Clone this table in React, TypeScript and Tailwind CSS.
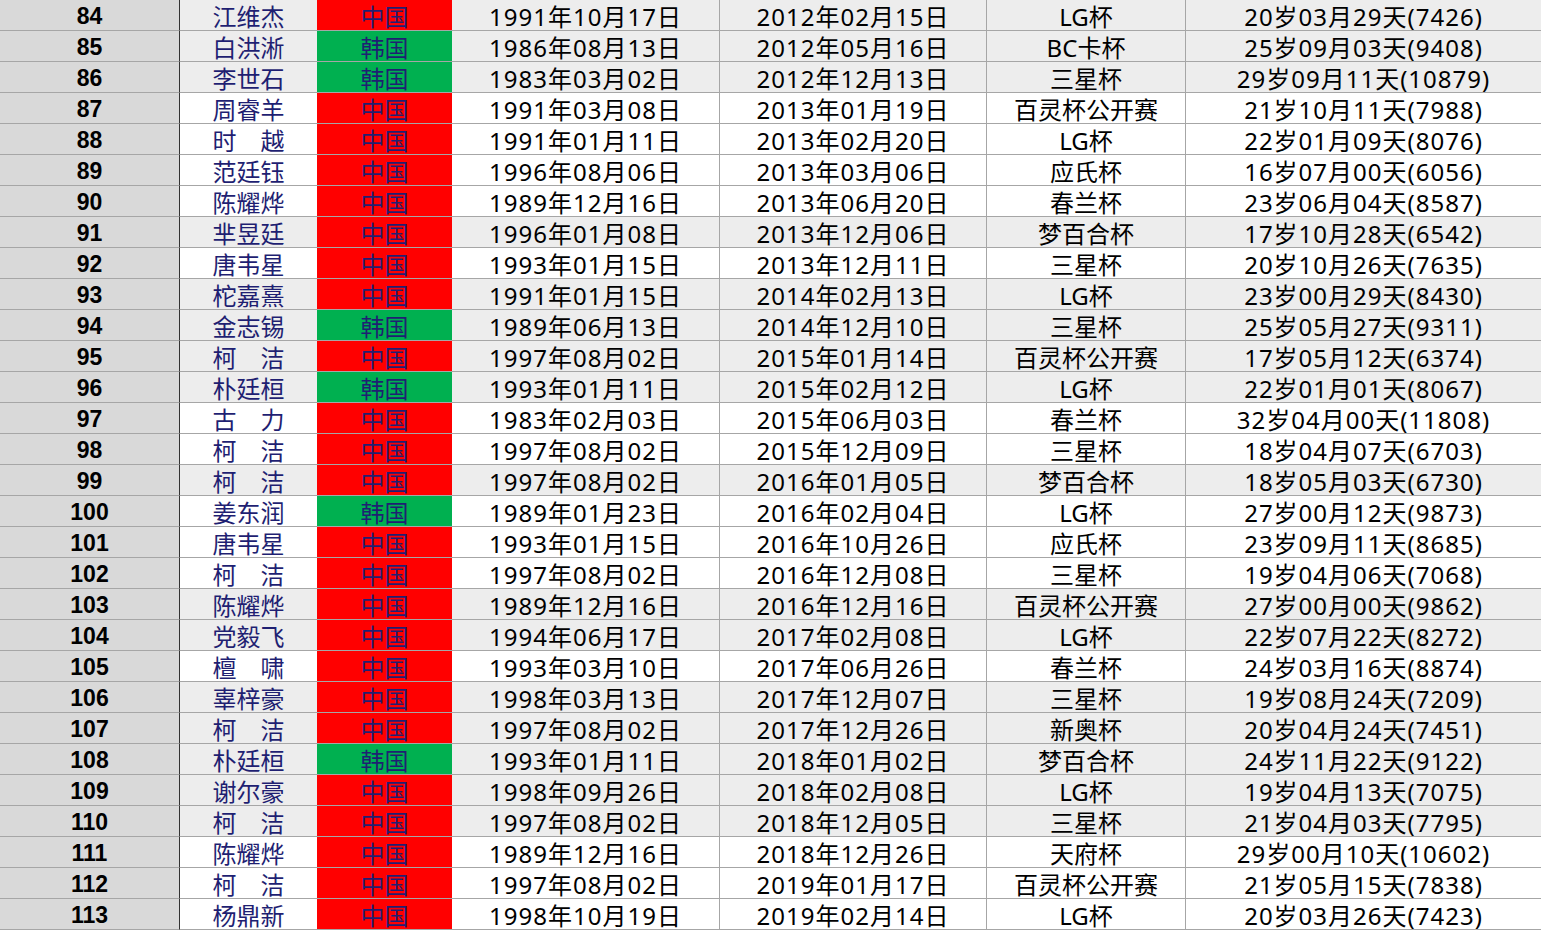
import React from "react";

type Row = [number, string, string, string, string, string, string];

const rows: Row[] = [
  [84, "江维杰", "中国", "1991年10月17日", "2012年02月15日", "LG杯", "20岁03月29天(7426)"],
  [85, "白洪淅", "韩国", "1986年08月13日", "2012年05月16日", "BC卡杯", "25岁09月03天(9408)"],
  [86, "李世石", "韩国", "1983年03月02日", "2012年12月13日", "三星杯", "29岁09月11天(10879)"],
  [87, "周睿羊", "中国", "1991年03月08日", "2013年01月19日", "百灵杯公开赛", "21岁10月11天(7988)"],
  [88, "时　越", "中国", "1991年01月11日", "2013年02月20日", "LG杯", "22岁01月09天(8076)"],
  [89, "范廷钰", "中国", "1996年08月06日", "2013年03月06日", "应氏杯", "16岁07月00天(6056)"],
  [90, "陈耀烨", "中国", "1989年12月16日", "2013年06月20日", "春兰杯", "23岁06月04天(8587)"],
  [91, "芈昱廷", "中国", "1996年01月08日", "2013年12月06日", "梦百合杯", "17岁10月28天(6542)"],
  [92, "唐韦星", "中国", "1993年01月15日", "2013年12月11日", "三星杯", "20岁10月26天(7635)"],
  [93, "柁嘉熹", "中国", "1991年01月15日", "2014年02月13日", "LG杯", "23岁00月29天(8430)"],
  [94, "金志锡", "韩国", "1989年06月13日", "2014年12月10日", "三星杯", "25岁05月27天(9311)"],
  [95, "柯　洁", "中国", "1997年08月02日", "2015年01月14日", "百灵杯公开赛", "17岁05月12天(6374)"],
  [96, "朴廷桓", "韩国", "1993年01月11日", "2015年02月12日", "LG杯", "22岁01月01天(8067)"],
  [97, "古　力", "中国", "1983年02月03日", "2015年06月03日", "春兰杯", "32岁04月00天(11808)"],
  [98, "柯　洁", "中国", "1997年08月02日", "2015年12月09日", "三星杯", "18岁04月07天(6703)"],
  [99, "柯　洁", "中国", "1997年08月02日", "2016年01月05日", "梦百合杯", "18岁05月03天(6730)"],
  [100, "姜东润", "韩国", "1989年01月23日", "2016年02月04日", "LG杯", "27岁00月12天(9873)"],
  [101, "唐韦星", "中国", "1993年01月15日", "2016年10月26日", "应氏杯", "23岁09月11天(8685)"],
  [102, "柯　洁", "中国", "1997年08月02日", "2016年12月08日", "三星杯", "19岁04月06天(7068)"],
  [103, "陈耀烨", "中国", "1989年12月16日", "2016年12月16日", "百灵杯公开赛", "27岁00月00天(9862)"],
  [104, "党毅飞", "中国", "1994年06月17日", "2017年02月08日", "LG杯", "22岁07月22天(8272)"],
  [105, "檀　啸", "中国", "1993年03月10日", "2017年06月26日", "春兰杯", "24岁03月16天(8874)"],
  [106, "辜梓豪", "中国", "1998年03月13日", "2017年12月07日", "三星杯", "19岁08月24天(7209)"],
  [107, "柯　洁", "中国", "1997年08月02日", "2017年12月26日", "新奥杯", "20岁04月24天(7451)"],
  [108, "朴廷桓", "韩国", "1993年01月11日", "2018年01月02日", "梦百合杯", "24岁11月22天(9122)"],
  [109, "谢尔豪", "中国", "1998年09月26日", "2018年02月08日", "LG杯", "19岁04月13天(7075)"],
  [110, "柯　洁", "中国", "1997年08月02日", "2018年12月05日", "三星杯", "21岁04月03天(7795)"],
  [111, "陈耀烨", "中国", "1989年12月16日", "2018年12月26日", "天府杯", "29岁00月10天(10602)"],
  [112, "柯　洁", "中国", "1997年08月02日", "2019年01月17日", "百灵杯公开赛", "21岁05月15天(7838)"],
  [113, "杨鼎新", "中国", "1998年10月19日", "2019年02月14日", "LG杯", "20岁03月26天(7423)"],
];

const greyRows = new Set([84, 85, 86, 91, 93, 94, 95, 96, 99, 103, 104, 106, 107, 108, 109, 110]);

const cell =
  "h-[31px] flex items-center justify-center pt-[3px] border-b border-b-[#a6a6a6] text-[24px] leading-none font-['Noto_Sans','Noto_Sans_CJK_SC',sans-serif]";

export default function App() {
  return (
    <div className="w-[1541px] h-[931px] overflow-hidden bg-white">
      <div className="grid grid-cols-[180px_137px_135px_268px_267px_199px_355px]">
        {rows.map((r) => {
          const grey = greyRows.has(r[0]);
          const bg = grey ? "bg-[#ededed]" : "bg-white";
          const flag = r[2] === "中国" ? "bg-[#ff0000]" : "bg-[#00b050]";
          return (
            <React.Fragment key={r[0]}>
              <div className="h-[31px] flex items-center justify-center pt-[2px] bg-[#d9d9d9] border-b border-b-[#a6a6a6] border-r border-r-[#333333] text-[23px] font-bold text-black leading-none font-['Liberation_Sans',Arial,sans-serif]">
                {r[0]}
              </div>
              <div className={`${cell} ${bg} text-[#1f1f72]`}>{r[1]}</div>
              <div className={`${cell} ${flag} text-[#1f1f72]`}>{r[2]}</div>
              <div className={`${cell} ${bg} border-r border-r-[#a6a6a6] text-black tracking-[1px]`}>{r[3]}</div>
              <div className={`${cell} ${bg} border-r border-r-[#a6a6a6] text-black tracking-[1px]`}>{r[4]}</div>
              <div className={`${cell} ${bg} border-r border-r-[#a6a6a6] text-black`}>{r[5]}</div>
              <div className={`${cell} ${bg} text-black tracking-[1px]`}>{r[6]}</div>
            </React.Fragment>
          );
        })}
      </div>
    </div>
  );
}
